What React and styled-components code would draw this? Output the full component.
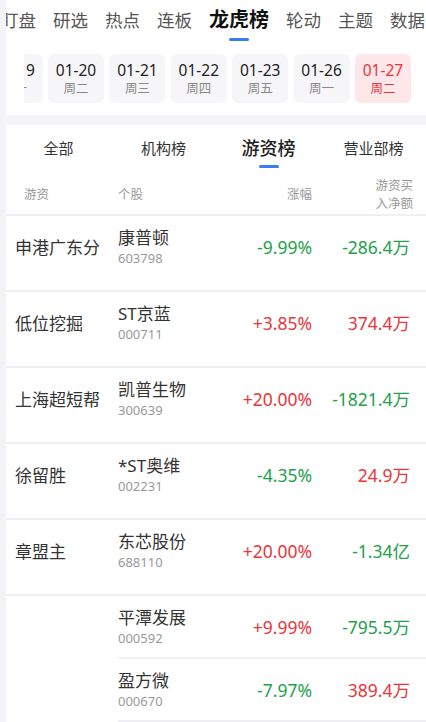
import styled, { createGlobalStyle } from "styled-components";

const GlobalStyle = createGlobalStyle`
  body {
    margin: 0;
    background: #f4f4f6;
    font-family: "Noto Sans", "Noto Sans CJK SC", sans-serif;
  }
`;

const navTabs = ["盯盘", "研选", "热点", "连板", "龙虎榜", "轮动", "主题", "数据"];
const dates = [
  { d: "01-19", w: "周一" },
  { d: "01-20", w: "周二" },
  { d: "01-21", w: "周三" },
  { d: "01-22", w: "周四" },
  { d: "01-23", w: "周五" },
  { d: "01-26", w: "周一" },
  { d: "01-27", w: "周二", active: true },
];
const subTabs = ["全部", "机构榜", "游资榜", "营业部榜"];

const groups = [
  { name: "申港广东分", rows: [{ s: "康普顿", c: "603798", p: "-9.99%", a: "-286.4万" }] },
  { name: "低位挖掘", rows: [{ s: "ST京蓝", c: "000711", p: "+3.85%", a: "374.4万" }] },
  { name: "上海超短帮", rows: [{ s: "凯普生物", c: "300639", p: "+20.00%", a: "-1821.4万" }] },
  { name: "徐留胜", rows: [{ s: "*ST奥维", c: "002231", p: "-4.35%", a: "24.9万" }] },
  { name: "章盟主", rows: [{ s: "东芯股份", c: "688110", p: "+20.00%", a: "-1.34亿" }] },
  {
    name: "",
    more: true,
    rows: [
      { s: "平潭发展", c: "000592", p: "+9.99%", a: "-795.5万" },
      { s: "盈方微", c: "000670", p: "-7.97%", a: "389.4万" },
    ],
  },
];

const tone = (v) => (v.startsWith("-") ? "#23a04c" : "#e8353a");

export default function App() {
  return (
    <>
      <GlobalStyle />
      <Page>
        <TopPanel>
          <NavViewport>
            <NavTrack>
              {navTabs.map((t) => (
                <NavItem key={t} $active={t === "龙虎榜"}>
                  <span>{t}</span>
                  <Underline $show={t === "龙虎榜"} />
                </NavItem>
              ))}
            </NavTrack>
          </NavViewport>
          <DateViewport>
            <DateTrack>
              {dates.map((x) => (
                <DatePill key={x.d} $active={x.active}>
                  <DateText>{x.d}</DateText>
                  <WeekText $active={x.active}>{x.w}</WeekText>
                </DatePill>
              ))}
            </DateTrack>
          </DateViewport>
        </TopPanel>

        <Card>
          <SubTabs>
            {subTabs.map((t) => (
              <SubTab key={t} $active={t === "游资榜"}>
                <span>{t}</span>
                <SubUnderline $show={t === "游资榜"} />
              </SubTab>
            ))}
          </SubTabs>
          <HeadRow>
            <HeadCell $pad>游资</HeadCell>
            <HeadCell>个股</HeadCell>
            <HeadCell $right>涨幅</HeadCell>
            <HeadCell $right>
              游资买
              <br />
              入净额
            </HeadCell>
          </HeadRow>
          {groups.map((g, i) => (
            <Group key={i}>
              <TraderName>{g.name}</TraderName>
              <Stocks>
                {g.rows.map((r, j) => (
                  <StockRow key={r.c} $divider={g.more || j < g.rows.length - 1}>
                    <StockCell>
                      <StockName>{r.s}</StockName>
                      <StockCode>{r.c}</StockCode>
                    </StockCell>
                    <Num $color={tone(r.p)}>{r.p}</Num>
                    <Num $color={tone(r.a)}>{r.a}</Num>
                  </StockRow>
                ))}
              </Stocks>
            </Group>
          ))}
        </Card>
      </Page>
    </>
  );
}

const Page = styled.div`
  padding-left: 6px;
  min-height: 722px;
`;

const TopPanel = styled.div`
  background: #fff;
  padding-bottom: 12px;
`;

const NavViewport = styled.div`
  overflow: hidden;
  padding-top: 8px;
`;

const NavTrack = styled.div`
  display: flex;
  gap: 17px;
  margin-left: -5px;
  white-space: nowrap;
`;

const NavItem = styled.div`
  display: flex;
  flex-direction: column;
  align-items: center;
  flex-shrink: 0;

  > span {
    font-size: ${(p) => (p.$active ? "20px" : "17.5px")};
    line-height: 24px;
    font-weight: ${(p) => (p.$active ? 700 : 400)};
    color: ${(p) => (p.$active ? "#111" : "#555")};
  }
`;

const Underline = styled.div`
  width: 20px;
  height: 3px;
  margin-top: 6px;
  border-radius: 2px;
  background: ${(p) => (p.$show ? "#3b7cf0" : "transparent")};
`;

const DateViewport = styled.div`
  overflow: hidden;
  margin: 13px 0 0 18px;
`;

const DateTrack = styled.div`
  display: flex;
  gap: 5.4px;
  margin-left: -37.4px;
`;

const DatePill = styled.div`
  flex: 0 0 56px;
  height: 49px;
  box-sizing: border-box;
  padding-top: 6px;
  border-radius: 6px;
  display: flex;
  flex-direction: column;
  align-items: center;
  background: ${(p) => (p.$active ? "#fde7e8" : "#f6f6f8")};
  color: ${(p) => (p.$active ? "#e8353a" : "#222")};
`;

const DateText = styled.div`
  font-size: 15.5px;
  line-height: 20px;
`;

const WeekText = styled.div`
  font-size: 12.5px;
  line-height: 18px;
  color: ${(p) => (p.$active ? "#e8353a" : "#8a8a8a")};
`;

const Card = styled.div`
  background: #fff;
  margin-top: 10px;
`;

const SubTabs = styled.div`
  display: grid;
  grid-template-columns: repeat(4, 1fr);
  padding-top: 11px;
`;

const SubTab = styled.div`
  display: flex;
  flex-direction: column;
  align-items: center;

  > span {
    font-size: ${(p) => (p.$active ? "18px" : "15px")};
    line-height: 24px;
    font-weight: ${(p) => (p.$active ? 500 : 400)};
    color: ${(p) => (p.$active ? "#222" : "#333")};
  }
`;

const SubUnderline = styled.div`
  width: 20px;
  height: 3px;
  margin-top: 5px;
  border-radius: 2px;
  background: ${(p) => (p.$show ? "#3b7cf0" : "transparent")};
`;

const HeadRow = styled.div`
  display: grid;
  grid-template-columns: 112px 106px 88px 1fr;
  align-items: center;
  height: 48px;
  box-sizing: border-box;
  padding: 7px 13px 0 0;
  border-bottom: 2px solid #f0f0f2;
`;

const HeadCell = styled.div`
  font-size: 12.5px;
  line-height: 18px;
  color: #999;
  text-align: ${(p) => (p.$right ? "right" : "left")};
  padding-left: ${(p) => (p.$pad ? "18px" : "0")};
`;

const Group = styled.div`
  display: flex;
  min-height: 74px;
  border-bottom: 2px solid #f0f0f2;
`;

const TraderName = styled.div`
  width: 112px;
  flex-shrink: 0;
  box-sizing: border-box;
  height: 61px;
  padding-left: 9px;
  display: flex;
  align-items: center;
  font-size: 17px;
  color: #333;
  white-space: nowrap;
`;

const Stocks = styled.div`
  flex: 1;
`;

const StockRow = styled.div`
  display: grid;
  grid-template-columns: 106px 88px 1fr;
  align-items: center;
  height: ${(p) => (p.$divider ? "63px" : "61px")};
  box-sizing: border-box;
  padding-right: 16px;
  border-bottom: ${(p) => (p.$divider ? "2px solid #f0f0f2" : "none")};
`;

const StockCell = styled.div`
  display: flex;
  flex-direction: column;
`;

const StockName = styled.div`
  font-size: 17px;
  line-height: 22px;
  color: #333;
  white-space: nowrap;
`;

const StockCode = styled.div`
  font-size: 13px;
  line-height: 18px;
  color: #999;
`;

const Num = styled.div`
  font-size: 17.5px;
  text-align: right;
  color: ${(p) => p.$color};
  white-space: nowrap;
`;
